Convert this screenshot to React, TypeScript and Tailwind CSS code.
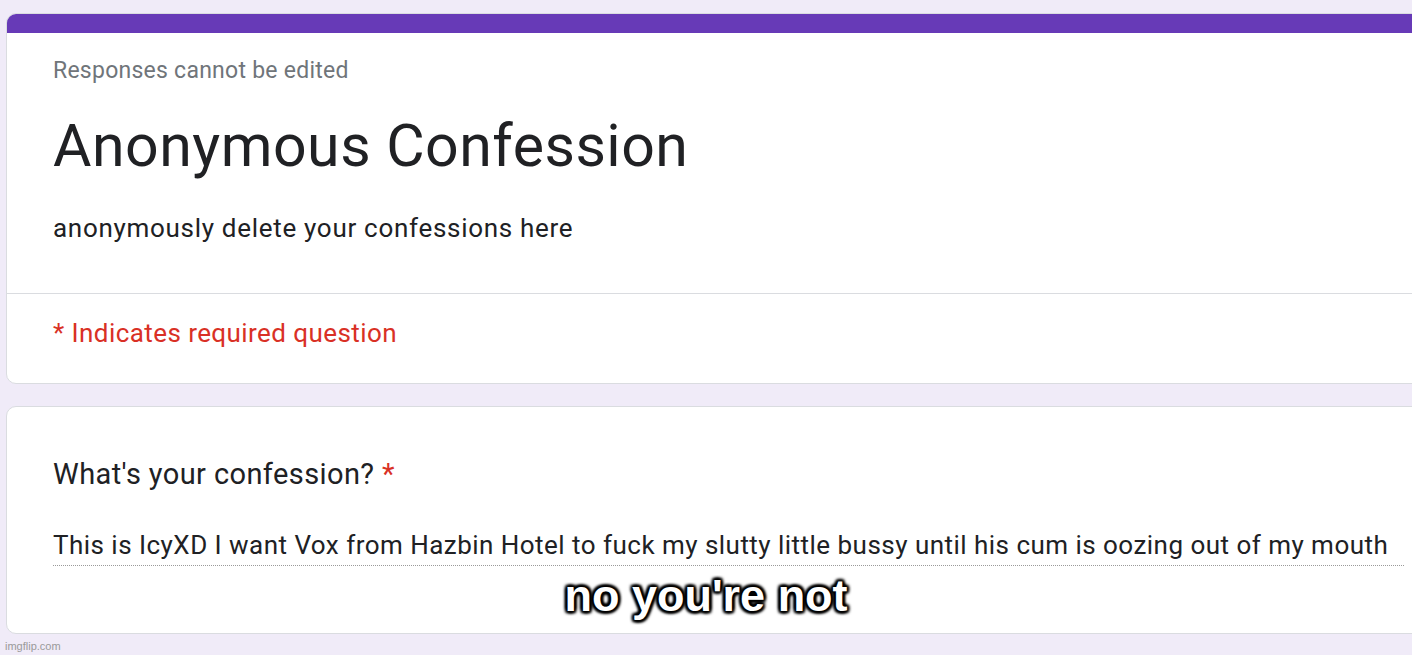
import React from 'react';

const roboto = { fontFamily: 'Roboto, "Liberation Sans", sans-serif' };

const App: React.FC = () => {
  return (
    <div className="relative w-[1412px] h-[655px] overflow-hidden bg-[#f0ebf8]" style={roboto}>
      <div className="pt-[13px] pl-[6px]">
        {/* Header card */}
        <div className="w-[1440px] rounded-[10px] border border-[#dadce0] bg-white overflow-hidden">
          <div className="h-[19px] bg-[#673ab7]" />
          <div className="pl-[46px]">
            <div className="mt-[18px] h-[40px] leading-[40px] text-[23px] text-[#70757a] tracking-[0.25px]">
              Responses cannot be edited
            </div>
            <div className="mt-[25px] h-[60px] leading-[60px] text-[59px] text-[#202124] tracking-[0.5px]">
              Anonymous Confession
            </div>
            <div className="mt-[32px] h-[40px] leading-[40px] text-[26px] text-[#202124] tracking-[0.7px]">
              anonymously delete your confessions here
            </div>
          </div>
          <div className="mt-[45px] h-px bg-[#dadce0]" />
          <div className="pl-[46px]">
            <div className="mt-[19px] mb-[30px] h-[40px] leading-[40px] text-[26px] text-[#d93025] tracking-[0.43px]">
              * Indicates required question
            </div>
          </div>
        </div>

        {/* Question card */}
        <div className="mt-[22px] w-[1440px] h-[228px] rounded-[10px] border border-[#dadce0] bg-white">
          <div className="pl-[46px]">
            <div className="mt-[47px] h-[40px] leading-[40px] text-[29px] text-[#202124] tracking-[0.4px]">
              What's your confession? <span className="text-[#d93025]">*</span>
            </div>
            <div className="mt-[32px] w-[1351px] h-[40px] leading-[38px] border-b border-dotted border-[#9a9a9a] text-[26px] text-[#202124] tracking-[0.47px] whitespace-nowrap">
              This is IcyXD I want Vox from Hazbin Hotel to fuck my slutty little bussy until his cum is oozing out of my mouth
            </div>
          </div>
        </div>
      </div>

      {/* meme caption */}
      <div
        className="absolute left-0 right-0 top-[571px] text-center text-[45px] font-bold leading-[50px] text-white"
        style={{
          fontFamily: '"Liberation Sans", Arial, sans-serif',
          textShadow:
            '2px 2px 3px #000, -2px -2px 3px #000, 2px -2px 3px #000, -2px 2px 3px #000, 0 2px 3px #000, 0 -2px 3px #000, 2px 0 3px #000, -2px 0 3px #000',
        }}
      >
        no you're not
      </div>

      <div
        className="absolute left-[5px] bottom-[2px] text-[11px] leading-[14px] text-[#9a9a9a]"
        style={{ fontFamily: '"Liberation Sans", Arial, sans-serif' }}
      >
        imgflip.com
      </div>
    </div>
  );
};

export default App;
